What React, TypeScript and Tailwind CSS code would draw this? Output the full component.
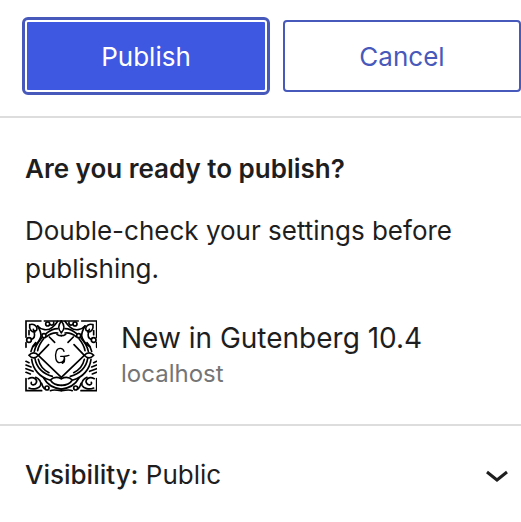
function OrnamentHalf() {
  return (
    <g>
      {/* frame */}
      <path d="M78 33H33V82M33 98V112M88 33H138" />
      {/* upper corner curls */}
      <path d="M44 44C54 40 66 46 66 56C66 64 56 65 55 58M44 44C42 58 50 68 60 66" />
      <path d="M42 62V74" />
      <circle cx="42" cy="90" r="7" />
      <circle cx="98" cy="42" r="6" />
      <path d="M50 88C58 84 60 78 58 70M106 44C112 48 118 42 116 36" />
      {/* crossing bands */}
      <path d="M68 48C78 60 98 64 112 52C120 46 124 40 128 34" />
      <path d="M54 110C66 102 76 90 78 78C78 68 74 58 68 48" />
      <circle cx="87" cy="77" r="6" />
      <path d="M93 71C106 60 118 56 128 56M80 84C68 98 60 112 58 124M95 80C106 70 118 68 128 69M86 86C76 98 70 110 68 122" />
      {/* crown */}
      <path d="M139 33C130 44 128 58 139 68" />
      <path d="M126 73C130 76 134 77 139 77" />
      {/* side drop */}
      <path d="M42 136C50 126 62 126 70 136C62 146 50 146 42 136Z" />
      {/* diamond */}
      <path d="M70 136L101 104M103 81L119 97M70 136L139 202" />
      {/* lower rings */}
      <path d="M50 148C54 178 74 202 104 210M60 146C64 172 84 192 112 199M70 148C74 166 86 180 102 188" />
      <path d="M48 124C50 112 56 104 62 98" />
      {/* hatching */}
      <path d="M33 154L42 158M33 165L48 171M33 176L54 184M33 187L46 192" />
      {/* lower corner curls */}
      <path d="M33 206V242H80M40 206C56 198 68 208 64 218C60 228 46 226 49 217" />
      <path d="M42 234C56 240 72 236 77 226C80 216 72 206 62 202" />
      <circle cx="96" cy="234" r="6" />
      {/* lower fan */}
      <path d="M139 206C126 200 114 202 106 210C112 220 126 226 139 226" />
      <path d="M86 204C96 222 116 235 139 237M80 220C82 228 84 232 88 236M106 242C114 238 126 240 139 242" />
    </g>
  );
}

function SiteIcon() {
  return (
    <svg
      viewBox="30 30 216 216"
      className="size-[72px] shrink-0 text-black"
      fill="none"
      stroke="currentColor"
      strokeWidth="5"
      strokeLinecap="round"
      role="img"
      aria-label="Site icon"
    >
      <OrnamentHalf />
      <g transform="matrix(-1 0 0 1 278 0)">
        <OrnamentHalf />
      </g>
      <path
        strokeWidth="4"
        d="M147 124C144 113 129 112 124 124C119 138 122 158 134 158C145 158 150 148 147 139H137M147 139C153 137 158 139 162 136M148 140C150 150 149 158 142 160"
      />
    </svg>
  );
}

export default function App() {
  return (
    <div className="min-h-screen bg-white font-[Inter,sans-serif] text-[26px] leading-[38px] text-[#1e1e1e]">
      <header className="grid grid-cols-[121fr_119fr] gap-4 border-b-2 border-[#ddd] pt-5 pb-6 pl-[25px]">
        <button
          type="button"
          className="h-[72px] rounded-[3px] border-2 border-white bg-[#3e58e1] pt-0.5 text-white outline-3 outline-[#4759bb]"
        >
          Publish
        </button>
        <button
          type="button"
          className="h-[72px] rounded-[4px] border-2 border-[#4759bb] bg-white pt-0.5 text-[#4759bb]"
        >
          Cancel
        </button>
      </header>

      <section className="border-b-2 border-[#ddd] px-[25px] pt-8 pb-8">
        <h2 className="font-semibold">Are you ready to publish?</h2>
        <p className="mt-6">Double-check your settings before publishing.</p>
        <div className="mt-8 flex items-center gap-6">
          <SiteIcon />
          <div>
            <div className="text-[28px] leading-9">New in Gutenberg 10.4</div>
            <div className="text-[24px] leading-9 text-[#757575]">localhost</div>
          </div>
        </div>
      </section>

      <button
        type="button"
        aria-expanded="false"
        className="flex w-full items-center justify-between py-[30px] pr-3 pl-[25px] text-left"
      >
        <span>
          <span className="font-medium">Visibility:</span> Public
        </span>
        <svg
          viewBox="0 0 24 24"
          className="size-6"
          fill="none"
          stroke="currentColor"
          strokeWidth="3"
          aria-hidden="true"
        >
          <path d="M2 9L12 17L22 9" />
        </svg>
      </button>
    </div>
  );
}
